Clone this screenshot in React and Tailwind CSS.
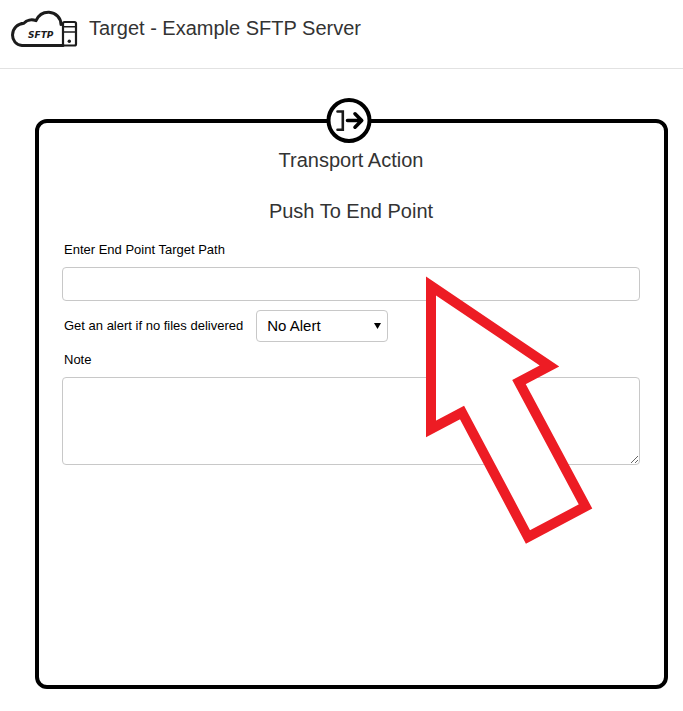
import { useState } from "react";

function SftpLogo() {
  return (
    <svg width="68" height="40" viewBox="0 0 68 40" fill="none" aria-hidden="true">
      <path
        d="M52 35.5H11C5 35 1.5 30.5 1.5 25C1.7 18.5 6.5 13.5 13 13.2C15.5 10 20.5 9 25 10.6C27.5 5 32.5 2 38 2.2C45 2.7 50 8 50 14.5"
        stroke="#1c1c1c"
        strokeWidth="3"
        strokeLinecap="round"
        strokeLinejoin="round"
      />
      <rect x="52" y="12" width="13" height="23.5" rx="1.5" fill="#fff" stroke="#1c1c1c" strokeWidth="2.2" />
      <path d="M52 16.8H65M52 22H65" stroke="#1c1c1c" strokeWidth="1.6" />
      <circle cx="58.3" cy="31.3" r="1.7" fill="#1c1c1c" />
      <text
        x="17"
        y="28"
        className="font-['DejaVu_Sans',sans-serif] text-[9px] font-bold italic"
        fill="#1c1c1c"
      >
        SFTP
      </text>
    </svg>
  );
}

function PushBadge() {
  return (
    <svg width="52" height="46" viewBox="0 0 52 46" fill="none" aria-hidden="true">
      <circle cx="23" cy="22.5" r="20.5" fill="#fff" stroke="#000" strokeWidth="4" />
      <path d="M11.5 13.5H16.8V31.8H11.5" stroke="#1a1a1a" strokeWidth="2.6" strokeLinecap="round" />
      <path
        d="M21.5 22.5H35.5M29 15.8L35.7 22.5L29 29.2"
        stroke="#000"
        strokeWidth="3.6"
        strokeLinecap="round"
        strokeLinejoin="round"
      />
    </svg>
  );
}

function PointerArrow() {
  return (
    <svg width="168" height="270" viewBox="0 0 168 270" fill="none" aria-hidden="true">
      <path
        d="M5 10L123.5 90L93 106L159.5 230.5L102 261L36 136.5L5 153Z"
        fill="#fff"
        stroke="#ed1c24"
        strokeWidth="10"
        strokeMiterlimit="10"
      />
    </svg>
  );
}

function App() {
  const [path, setPath] = useState("");
  const [alert, setAlert] = useState("none");
  const [note, setNote] = useState("");

  return (
    <div className="bg-white font-['Liberation_Sans',Arial,sans-serif] text-black">
      <header className="flex items-start gap-[10px] border-b border-[#e2e2e2] px-[11px] pb-[18px] pt-[10px]">
        <SftpLogo />
        <h1 className="pt-1 text-[20px] leading-7 text-[#333]">Target - Example SFTP Server</h1>
      </header>

      <main className="pb-[22px] pl-[35px] pr-[15px] pt-[50px]">
        <section className="relative min-h-[570px] rounded-[12px] border-4 border-black pl-[23px] pr-6 pt-[23px]">
          <div className="absolute -top-[25px] left-1/2 -translate-x-1/2">
            <PushBadge />
          </div>

          <h2 className="text-center text-[20px] leading-7 text-[#333]">Transport Action</h2>
          <h3 className="mt-[23px] text-center text-[20px] leading-7 text-[#333]">Push To End Point</h3>

          <form onSubmit={(e) => e.preventDefault()}>
            <label htmlFor="path" className="mt-[15px] block pl-[2px] text-[13px] leading-5">
              Enter End Point Target Path
            </label>
            <input
              id="path"
              type="text"
              value={path}
              onChange={(e) => setPath(e.target.value)}
              className="mt-[7px] block h-[34px] w-full rounded border border-[#c8c8c8] px-[10px] text-[15px] outline-none"
            />

            <div className="mt-[9px] flex items-center gap-[13px]">
              <label htmlFor="alert" className="pl-[2px] text-[13px] leading-5">
                Get an alert if no files delivered
              </label>
              <div className="relative">
                <select
                  id="alert"
                  value={alert}
                  onChange={(e) => setAlert(e.target.value)}
                  className="block h-8 w-[132px] appearance-none rounded border border-[#c8c8c8] bg-white px-[10px] text-[15px] outline-none"
                >
                  <option value="none">No Alert</option>
                  <option value="daily">Daily</option>
                  <option value="weekly">Weekly</option>
                </select>
                <svg
                  width="7"
                  height="6"
                  viewBox="0 0 7 6"
                  className="pointer-events-none absolute right-[7px] top-[13px]"
                  aria-hidden="true"
                >
                  <path d="M0 0H7L3.5 6Z" fill="#000" />
                </svg>
              </div>
            </div>

            <label htmlFor="note" className="mt-2 block pl-[2px] text-[13px] leading-5">
              Note
            </label>
            <textarea
              id="note"
              value={note}
              onChange={(e) => setNote(e.target.value)}
              className="mt-[7px] block h-[88px] w-full resize-y rounded border border-[#c8c8c8] px-[10px] py-[6px] text-[15px] outline-none"
            />
          </form>

          {/* callout over the target path field */}
          <div className="pointer-events-none absolute left-[387px] top-[153px]">
            <PointerArrow />
          </div>
        </section>
      </main>
    </div>
  );
}

export default App;
